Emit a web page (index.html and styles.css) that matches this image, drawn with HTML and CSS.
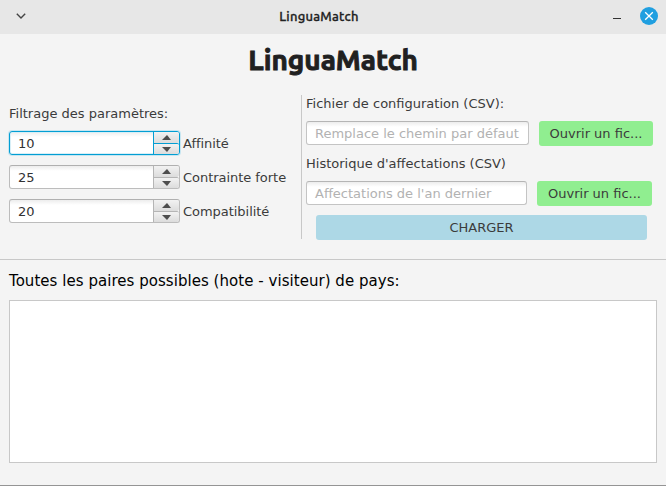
FILE: index.html
```html
<!DOCTYPE html>
<html lang="fr">
<head>
<meta charset="utf-8">
<title>LinguaMatch</title>
<link rel="stylesheet" href="styles.css">
</head>
<body>
<div class="window">
  <header class="titlebar">
    <svg class="menu-icon" width="12" height="8" viewBox="0 0 12 8"><path d="M1.800 1.800 6 6l4.200-4.200"/></svg>
    <span class="titlebar-text">LinguaMatch</span>
    <div class="controls">
      <svg width="8" height="18" viewBox="0 0 8 18"><path class="minimize" d="M0 11.500h8"/></svg>
      <svg width="18" height="18" viewBox="0 0 18 18"><circle cx="9" cy="9" r="9"/><path class="close" d="m5.200 5.200 7.600 7.600m0-7.600-7.600 7.600"/></svg>
    </div>
  </header>
  <h1><span>LinguaMatch</span></h1>
  <main class="settings">
    <section class="filters">
      <p class="label">Filtrage des paramètres:</p>
      <div class="row">
        <div class="spinner focused"><span class="value">10</span><div class="arrows"><div class="step"><i class="up"></i></div><div class="step"><i class="down"></i></div></div></div>
        <span class="label">Affinité</span>
      </div>
      <div class="row">
        <div class="spinner"><span class="value">25</span><div class="arrows"><div class="step"><i class="up"></i></div><div class="step"><i class="down"></i></div></div></div>
        <span class="label">Contrainte forte</span>
      </div>
      <div class="row">
        <div class="spinner"><span class="value">20</span><div class="arrows"><div class="step"><i class="up"></i></div><div class="step"><i class="down"></i></div></div></div>
        <span class="label">Compatibilité</span>
      </div>
    </section>
    <section class="files">
      <p class="label">Fichier de configuration (CSV):</p>
      <div class="file-row config">
        <div class="field">Remplace le chemin par défaut</div>
        <div class="button open">Ouvrir un fic...</div>
      </div>
      <p class="label">Historique d'affectations (CSV)</p>
      <div class="file-row history">
        <div class="field">Affectations de l'an dernier</div>
        <div class="button open">Ouvrir un fic...</div>
      </div>
      <div class="button load">CHARGER</div>
    </section>
  </main>
  <section class="pairs">
    <h2>Toutes les paires possibles (hote - visiteur) de pays:</h2>
    <div class="list"></div>
  </section>
</div>
</body>
</html>
```
FILE: styles.css
```css
* { box-sizing: border-box; }

body {
  margin: 0;
  font: 13px/16px "DejaVu Sans", sans-serif;
  color: #3b3b3b;
}

p, h1, h2 { margin: 0; }

.window {
  width: 666px;
  height: 486px;
  display: flex;
  flex-direction: column;
  background: #f4f4f4;
  border-bottom: 1px solid #949494;
  overflow: hidden;
}

.titlebar {
  height: 34px;
  flex: none;
  display: grid;
  grid-template-columns: 1fr auto 1fr;
  align-items: center;
  padding: 0 8px 2px 15px;
  background: #e7e7e7;
}

.titlebar-text {
  font: 500 13px/16px Ubuntu, "Noto Sans", sans-serif;
  letter-spacing: 0.25px;
  -webkit-text-stroke: 0.3px #222;
  color: #222;
  margin-right: 35px;
}

.menu-icon path { fill: none; stroke: #444; stroke-width: 1.400; }

.controls { display: flex; justify-content: flex-end; gap: 19px; }
.controls circle { fill: #209fe0; }
.minimize { stroke: #333; }
.close { stroke: #fff; stroke-width: 1.300; }

h1 {
  height: 61px;
  flex: none;
  padding-top: 8px;
  text-align: center;
  font: bold 28px/36px Ubuntu, "Noto Sans", sans-serif;
  -webkit-text-stroke: 0.9px #202020;
  color: #202020;
}

.settings {
  display: flex;
  height: 164px;
  flex: none;
  padding-left: 9px;
}

.filters { width: 292px; padding-top: 11px; }
.filters > .label { margin-bottom: 9px; }
.label { white-space: nowrap; }

.row {
  display: flex;
  align-items: center;
  gap: 3px;
  height: 24px;
  margin-bottom: 10px;
}

.row .label { padding-top: 2px; letter-spacing: -0.04px; }

.spinner {
  display: flex;
  width: 171px;
  height: 24px;
  border: 1px solid #bcbcbc;
  border-top-color: #b0b0b0;
  border-radius: 3px;
  background: linear-gradient(#ededed, #fff 5px);
}

.value { flex: 1; padding: 4px 8px 0; line-height: 16px; color: #323232; }

.arrows {
  width: 26px;
  display: flex;
  flex-direction: column;
  border-left: 1px solid #b5b5b5;
}

.step {
  flex: 1;
  display: flex;
  align-items: center;
  justify-content: center;
  background: linear-gradient(#f2f2f2, #dcdcdc);
  border-radius: 0 2px 2px 0;
}

.step + .step { border-top: 1px solid #b5b5b5; }

.up, .down { border: solid transparent; border-width: 0 4.500px; }
.up { border-bottom: 5px solid #4d4d4d; }
.down { border-top: 5px solid #4d4d4d; margin-top: 1px; }

/* the half pixel would be dropped from border widths */
.up, .down { border-left-width: 5px; border-right-width: 4px; }

.focused {
  border-color: #039ed3;
  box-shadow: 0 0 0 1px #c7e6f1, inset 0 0 0 1px #d8eff7;
}
.focused .arrows, .focused .step { border-color: #039ed3; }

.files {
  width: 357px;
  height: 144px;
  border-left: 1px solid #c8c8c8;
  padding-left: 4px;
}

.files .label { height: 26px; padding-top: 1px; }

.file-row { display: flex; gap: 10px; height: 34px; }

.field {
  width: 223px;
  height: 24px;
  padding: 4px 8px 0;
  line-height: 16px;
  white-space: nowrap;
  overflow: hidden;
  border: 1px solid #c4c4c4;
  border-top-color: #b5b5b5;
  border-radius: 3px;
  background: linear-gradient(#ededed, #fff 5px);
  color: #b2b2b2;
}

.history .field { width: 221px; }

.button {
  height: 25px;
  line-height: 25px;
  text-align: center;
  white-space: nowrap;
  border-radius: 3px;
}

.open { width: 114px; background: #90ee90; }
.history .open { width: 115px; }
.load { width: 331px; margin-left: 10px; background: #add8e6; }

.pairs {
  flex: 1;
  border-top: 1px solid #c8c8c8;
  padding: 11px 9px 0;
}

h2 { font-size: 15px; font-weight: normal; line-height: 20px; letter-spacing: 0.04px; color: #000; margin-bottom: 9px; }

.list { height: 163px; width: 648px; background: #fff; border: 1px solid #c8c8c8; }
```
